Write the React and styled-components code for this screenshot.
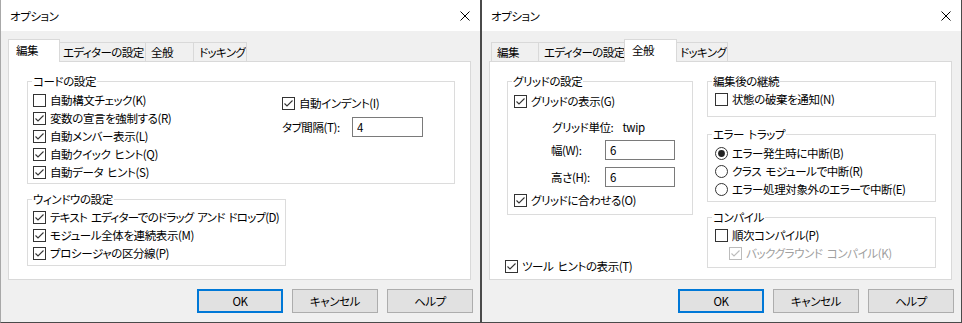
import React from "react";
import styled, { createGlobalStyle } from "styled-components";

const GlobalStyle = createGlobalStyle`
  html, body { margin: 0; padding: 0; background: #f0f0f0; }
  body {
    font-family: "Noto Sans CJK JP", "Noto Sans", sans-serif;
    font-size: 11.5px;
    letter-spacing: -0.4px;
    word-spacing: 2px;
    color: #000;
    font-feature-settings: "palt";
  }
  * { box-sizing: border-box; }
`;

const Screen = styled.div`
  display: flex;
  width: 962px;
  height: 323px;
  overflow: hidden;
`;

const Window = styled.div`
  width: 481px;
  height: 323px;
  flex: 0 0 481px;
  display: flex;
  flex-direction: column;
  background: #f0f0f0;
  border: 1px solid #4a4a4a;
  border-top: none;
  border-left-color: ${(p) => p.$edge || "#4a4a4a"};
`;

const TitleBar = styled.div`
  height: 31px;
  flex: 0 0 31px;
  background: #fff;
  display: flex;
  align-items: center;
  justify-content: space-between;
  padding: 0 10px 0 9px;
`;

const Body = styled.div`
  display: flex;
  flex-direction: column;
  padding: 8px 7px 0 7px;
`;

const TabStrip = styled.div`
  display: flex;
  align-items: flex-end;
  height: 22px;
  padding-left: 2px;
`;

const Tab = styled.div`
  width: ${(p) => (p.$active ? p.$w + 4 : p.$w)}px;
  height: ${(p) => (p.$active ? 23 : 19)}px;
  margin-left: ${(p) => (p.$first ? 0 : -1) - (p.$active ? 2 : 0)}px;
  margin-right: ${(p) => (p.$active ? -2 : 0)}px;
  margin-bottom: ${(p) => (p.$active ? -1 : 0)}px;
  padding: 0 0 ${(p) => (p.$active ? 3 : 0)}px ${(p) => (p.$active ? 7 : 5)}px;
  border: 1px solid #d9d9d9;
  border-bottom: none;
  background: ${(p) => (p.$active ? "#fff" : "#f0f0f0")};
  display: flex;
  align-items: center;
  white-space: nowrap;
  overflow: hidden;
  letter-spacing: -0.6px;
  line-height: 14px;
  position: ${(p) => (p.$active ? "relative" : "static")};
  z-index: ${(p) => (p.$active ? 1 : "auto")};
`;

const Panel = styled.div`
  width: 463px;
  height: 219px;
  background: #fff;
  border: 1px solid #d9d9d9;
`;

const Footer = styled.div`
  display: flex;
  justify-content: flex-end;
  gap: 9px;
  margin-top: 9px;
`;

const Button = styled.div`
  width: 86px;
  height: 24px;
  background: #e1e1e1;
  border: ${(p) => (p.$primary ? "2px solid #0078d7" : "1px solid #adadad")};
  display: flex;
  align-items: center;
  justify-content: center;
  line-height: 14px;
`;

const Group = styled.fieldset`
  margin: ${(p) => p.$mt || 0}px 0 0 0;
  padding: 0;
  border: 1px solid #dcdcdc;
  width: ${(p) => p.$w}px;
  height: ${(p) => p.$h}px;
  min-width: 0;
`;

const Legend = styled.legend`
  padding: 0 1px;
  margin-left: 4px;
  line-height: 14px;
  white-space: nowrap;
`;

const GroupBody = styled.div`
  padding: ${(p) => p.$pt || 0}px 0 0 ${(p) => p.$pl || 5}px;
`;

const Row = styled.div`
  display: flex;
  align-items: center;
  gap: 4px;
  height: 18px;
  white-space: nowrap;
  line-height: 14px;
  margin-left: ${(p) => p.$indent || 0}px;
  margin-top: ${(p) => p.$mt || 0}px;
  color: ${(p) => (p.$disabled ? "#a0a0a0" : "#000")};
`;

const RowText = styled.span`
  letter-spacing: ${(p) => (p.$tight ? "-0.75px" : "inherit")};
`;

const FieldRow = styled.div`
  display: flex;
  align-items: center;
  height: ${(p) => p.$h || 20}px;
  margin-top: ${(p) => p.$mt || 0}px;
  margin-left: ${(p) => p.$indent || 0}px;
  white-space: nowrap;
  line-height: 14px;
`;

const FieldLabel = styled.span`
  width: ${(p) => p.$w}px;
  flex: 0 0 auto;
`;

const TextBox = styled.input`
  width: ${(p) => p.$w}px;
  height: 100%;
  border: 1px solid #7a7a7a;
  background: #fff;
  padding: 0 0 0 4px;
  margin: 0;
  font-family: inherit;
  font-size: 11.5px;
  letter-spacing: -0.4px;
  font-feature-settings: "palt";
  color: #000;
  outline: none;
`;

const UnitRow = styled.div`
  display: flex;
  align-items: center;
  gap: 9px;
  height: 18px;
  margin: 8px 0 0 38px;
  white-space: nowrap;
  line-height: 14px;
`;

const CodeGrid = styled.div`
  display: grid;
  grid-template-columns: 249px 1fr;
`;

const Column = styled.div`
  display: flex;
  flex-direction: column;
  padding-top: ${(p) => p.$pt || 0}px;
  width: ${(p) => (p.$w ? `${p.$w}px` : "auto")};
`;

const LeftContent = styled.div`
  display: flex;
  flex-direction: column;
  padding: 12px 0 0 18px;
`;

const RightContent = styled.div`
  display: flex;
  gap: 14px;
  padding: 12px 0 0 17px;
`;

const Box = ({ checked, disabled }) => {
  const c = disabled ? "#bcbcbc" : "#333";
  return (
    <svg width="13" height="13" viewBox="0 0 13 13" style={{ flex: "0 0 auto" }}>
      <rect x="0.5" y="0.5" width="12" height="12" fill="#fff" stroke={c} />
      {checked && (
        <polyline points="2.5,6.5 5,9 10.5,3.5" fill="none" stroke={c} strokeWidth="1.1" />
      )}
    </svg>
  );
};

const Radio = ({ checked }) => (
  <svg width="13" height="13" viewBox="0 0 13 13" style={{ flex: "0 0 auto" }}>
    <circle cx="6.5" cy="6.5" r="6" fill="#fff" stroke="#333" />
    {checked && <circle cx="6.5" cy="6.5" r="3.4" fill="#222" />}
  </svg>
);

const Check = ({ label, checked, disabled, indent, mt, tight }) => (
  <Row $disabled={disabled} $indent={indent} $mt={mt}>
    <Box checked={checked} disabled={disabled} />
    <RowText $tight={tight}>{label}</RowText>
  </Row>
);

const Option = ({ label, checked }) => (
  <Row>
    <Radio checked={checked} />
    <RowText>{label}</RowText>
  </Row>
);

const CloseIcon = () => (
  <svg width="10" height="10" viewBox="0 0 10 10">
    <path d="M0.5 0.5 L9.5 9.5 M9.5 0.5 L0.5 9.5" stroke="#000" strokeWidth="1" fill="none" />
  </svg>
);

const TABS = [
  { label: "編集", w: 48 },
  { label: "エディターの設定", w: 89 },
  { label: "全般", w: 49 },
  { label: "ドッキング", w: 54 },
];

const Dialog = ({ active, edge, children }) => (
  <Window $edge={edge}>
    <TitleBar>
      <span>オプション</span>
      <CloseIcon />
    </TitleBar>
    <Body>
      <TabStrip>
        {TABS.map((t, i) => (
          <Tab key={t.label} $w={t.w} $first={i === 0} $active={i === active}>
            {t.label}
          </Tab>
        ))}
      </TabStrip>
      <Panel>{children}</Panel>
      <Footer>
        <Button $primary>OK</Button>
        <Button>キャンセル</Button>
        <Button>ヘルプ</Button>
      </Footer>
    </Body>
  </Window>
);

const EditorPage = () => (
  <LeftContent>
    <Group $w={428} $h={110}>
      <Legend>コードの設定</Legend>
      <GroupBody $pt={3}>
        <CodeGrid>
          <Column>
            <Check label="自動構文チェック(K)" />
            <Check label="変数の宣言を強制する(R)" checked />
            <Check label="自動メンバー表示(L)" checked />
            <Check label="自動クイック ヒント(Q)" checked />
            <Check label="自動データ ヒント(S)" checked />
          </Column>
          <Column $pt={3}>
            <Check label="自動インデント(I)" checked />
            <FieldRow $mt={5} $h={20}>
              <FieldLabel $w={70}>タブ間隔(T):</FieldLabel>
              <TextBox $w={71} defaultValue="4" readOnly />
            </FieldRow>
          </Column>
        </CodeGrid>
      </GroupBody>
    </Group>
    <Group $w={259} $h={74} $mt={8}>
      <Legend>ウィンドウの設定</Legend>
      <GroupBody $pt={2}>
        <Check label="テキスト エディターでのドラッグ アンド ドロップ(D)" checked tight />
        <Check label="モジュール全体を連続表示(M)" checked />
        <Check label="プロシージャの区分線(P)" checked />
      </GroupBody>
    </Group>
  </LeftContent>
);

const GeneralPage = () => (
  <RightContent>
    <Column $w={186}>
      <Group $w={186} $h={141}>
        <Legend>グリッドの設定</Legend>
        <GroupBody $pt={4} $pl={6}>
          <Check label="グリッドの表示(G)" checked />
          <UnitRow>
            <span>グリッド単位:</span>
            <span>twip</span>
          </UnitRow>
          <FieldRow $mt={4} $indent={37}>
            <FieldLabel $w={54}>幅(W):</FieldLabel>
            <TextBox $w={70} defaultValue="6" readOnly />
          </FieldRow>
          <FieldRow $mt={7} $indent={37}>
            <FieldLabel $w={54}>高さ(H):</FieldLabel>
            <TextBox $w={70} defaultValue="6" readOnly />
          </FieldRow>
          <Check label="グリッドに合わせる(O)" checked mt={4} />
        </GroupBody>
      </Group>
      <Check label="ツール ヒントの表示(T)" checked indent={-2} mt={42} />
    </Column>
    <Column $w={229}>
      <Group $w={229} $h={43}>
        <Legend>編集後の継続</Legend>
        <GroupBody $pt={2} $pl={7}>
          <Check label="状態の破棄を通知(N)" />
        </GroupBody>
      </Group>
      <Group $w={229} $h={75} $mt={10}>
        <Legend>エラー トラップ</Legend>
        <GroupBody $pt={3} $pl={7}>
          <Option label="エラー発生時に中断(B)" checked />
          <Option label="クラス モジュールで中断(R)" />
          <Option label="エラー処理対象外のエラーで中断(E)" />
        </GroupBody>
      </Group>
      <Group $w={229} $h={58} $mt={8}>
        <Legend>コンパイル</Legend>
        <GroupBody $pt={2} $pl={7}>
          <Check label="順次コンパイル(P)" />
          <Check label="バックグラウンド コンパイル(K)" checked disabled indent={14} />
        </GroupBody>
      </Group>
    </Column>
  </RightContent>
);

export default function App() {
  return (
    <>
      <GlobalStyle />
      <Screen>
        <Dialog active={0} edge="#a8a8a8">
          <EditorPage />
        </Dialog>
        <Dialog active={2}>
          <GeneralPage />
        </Dialog>
      </Screen>
    </>
  );
}
